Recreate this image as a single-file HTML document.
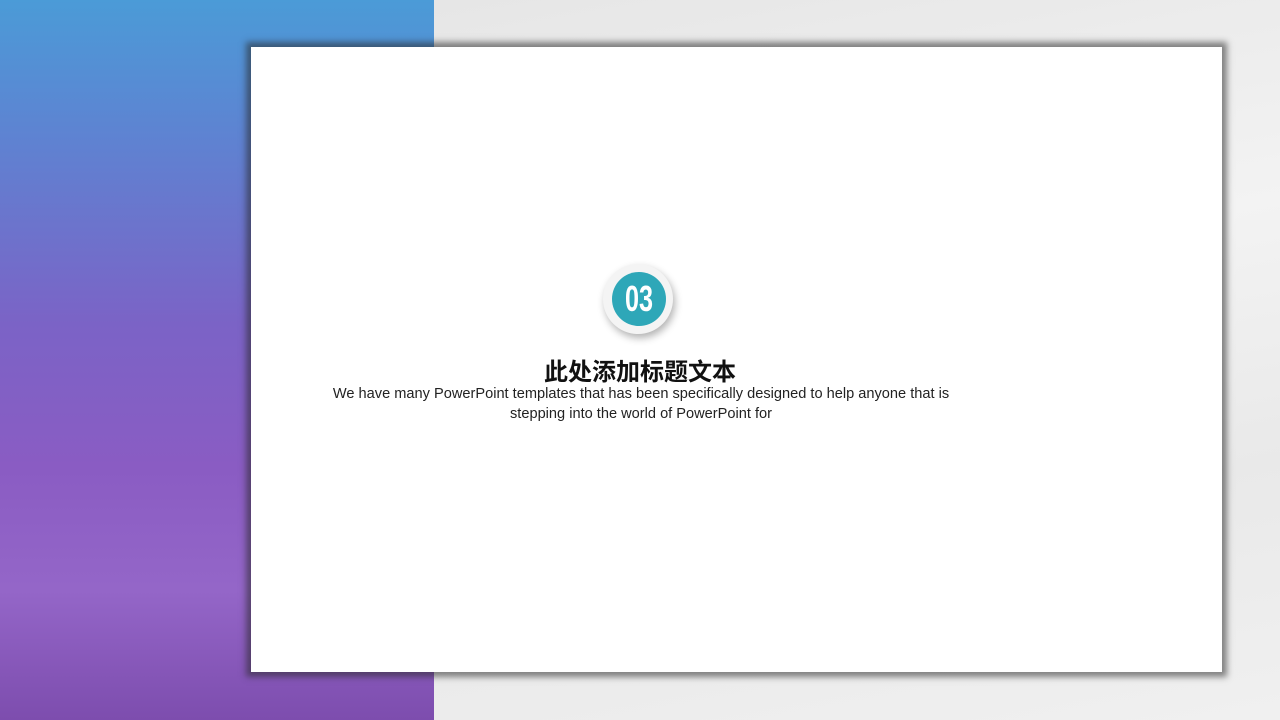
<!DOCTYPE html>
<html><head><meta charset="utf-8"><style>
body{margin:0;width:1280px;height:720px;overflow:hidden;position:relative;font-family:"Liberation Sans","Noto Sans CJK SC",sans-serif;background:#ebebeb}
.left{position:absolute;left:0;top:0;width:434px;height:720px;background:linear-gradient(180deg,#4b9bd7 0%,#5d84d2 18%,#7b63c6 45%,#8a5cc3 65%,#9466c8 82%,#7d4dae 100%)}
.right{position:absolute;left:434px;top:0;width:846px;height:720px;background:linear-gradient(170deg,#e6e6e6,#f3f3f3 40%,#e9e9e9 70%,#f0f0f0)}
.box{position:absolute;left:251px;top:47px;width:971px;height:625px;background:#fff;box-shadow:0 0 6px 5px rgba(40,40,40,.55)}
.circ{position:absolute;left:603px;top:264px;width:70px;height:70px;border-radius:50%;background:#f4f4f4;box-shadow:2px 4px 8px rgba(0,0,0,.3)}
.inner{position:absolute;left:9px;top:8px;width:54px;height:54px;border-radius:50%;background:#2ea7b8;color:#fff;text-align:center}
.inner span{display:inline-block;font:bold 36px/54px "Liberation Sans",sans-serif;transform:scaleX(.7)}
h1{position:absolute;left:0;width:1280px;top:352px;margin:0;text-align:center;font-size:24px;font-weight:bold;color:#111}
p{position:absolute;left:300px;width:682px;top:384px;margin:0;text-align:center;font-size:14.6px;line-height:20px;color:#222}
</style></head><body>
<div class="left"></div><div class="right"></div>
<div class="box"></div>
<div class="circ"><div class="inner"><span>03</span></div></div>
<h1>此处添加标题文本</h1>
<p>We have many PowerPoint templates that has been specifically designed to help anyone that is<br>stepping into the world of PowerPoint for</p>
</body></html>
